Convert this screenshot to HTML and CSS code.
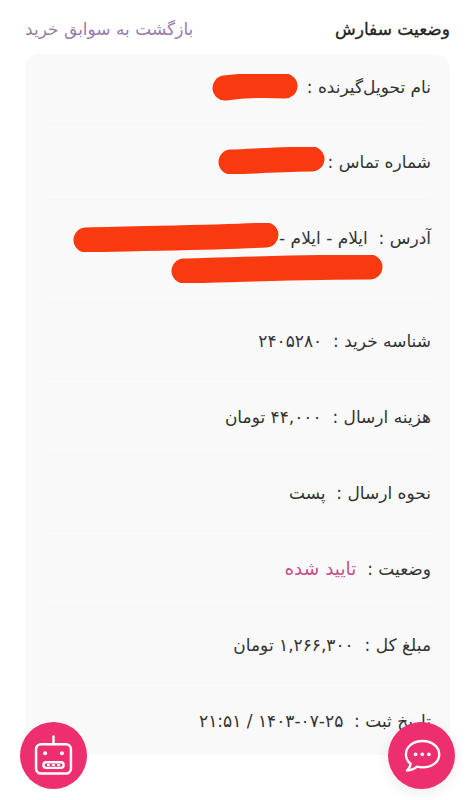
FILE: index.html
```html
<!DOCTYPE html>
<html lang="fa" dir="rtl">
<head>
<meta charset="utf-8">
<title>وضعیت سفارش</title>
<link rel="stylesheet" href="styles.css">
</head>
<body>
<div class="page">
  <header class="top">
    <h1 class="title">وضعیت سفارش</h1>
    <a class="back">بازگشت به سوابق خرید</a>
  </header>
  <main class="card">
    <div class="row row-name"><span class="label">نام تحویل‌گیرنده :</span>
      <svg class="scribble s-name" viewBox="0 0 86 27"><path d="M13 14 C35 11 55 11 73 12" /></svg></div>
    <div class="row row-phone"><span class="label">شماره تماس :</span>
      <svg class="scribble s-phone" viewBox="0 0 107 27"><path d="M13 15 C40 14 70 12 94 12" /></svg></div>
    <div class="row row-address">
      <div class="addr-line"><span class="label">آدرس :&nbsp; ایلام - ایلام -</span>
        <svg class="scribble s-addr1" viewBox="0 0 206 29"><path d="M13 17 C70 15 140 15 193 12" /></svg></div>
      <svg class="scribble s-addr2" viewBox="0 0 212 28"><path d="M13 16 C80 14 140 12 199 12" /></svg>
    </div>
    <div class="row"><span class="label">شناسه خرید :&nbsp; ۲۴۰۵۲۸۰</span></div>
    <div class="row"><span class="label">هزینه ارسال :&nbsp; ۴۴,۰۰۰ تومان</span></div>
    <div class="row"><span class="label">نحوه ارسال :&nbsp; پست</span></div>
    <div class="row"><span class="label">وضعیت :&nbsp; <span class="status">تایید شده</span></span></div>
    <div class="row"><span class="label">مبلغ کل :&nbsp; ۱,۲۶۶,۳۰۰ تومان</span></div>
    <div class="row row-last"><span class="label">تاریخ ثبت :&nbsp; ۲۵-۰۷-۱۴۰۳ / ۲۱:۵۱</span></div>
  </main>
</div>
<button class="fab fab-chat" aria-label="چت">
  <svg viewBox="0 0 40 40" class="fab-icon icon-chat"><path d="M21 6.500C12 6.500 5.500 12 5.500 19c0 3.500 1.700 6.500 4.300 8.700-.3 2.500-1.600 5-3.300 6.300 3.500-.1 7-1.500 9.300-3.600 1.800.5 3.500.7 5.200.7 9 0 15.500-5.300 15.500-12.100S30 6.500 21 6.500Z"/><circle class="dot" cx="14.500" cy="19" r="1.700"/><circle class="dot" cx="20.700" cy="19" r="1.700"/><circle class="dot" cx="26.900" cy="19" r="1.700"/></svg>
</button>
<button class="fab fab-bot" aria-label="ربات">
  <svg viewBox="0 0 40 40" class="fab-icon icon-bot"><path d="M20 3v7"/><rect x="4.500" y="10" width="31" height="26" rx="4.500"/><rect x="11" y="26" width="18" height="5" rx="2.500"/><path class="thin" d="M15 28.500h1M19.500 28.500h1M24 28.500h1"/><circle class="dot" cx="12.500" cy="18" r="1.800"/><circle class="dot" cx="27.500" cy="18" r="1.800"/></svg>
</button>
</body>
</html>
```
FILE: styles.css
```css
* { box-sizing: border-box; }
html, body { margin: 0; padding: 0; height: 800px; overflow: hidden; background: #fff; }
body { font-family: "DejaVu Sans", "Noto Sans", sans-serif; color: #333; position: relative; }
.page { padding: 19px 25px 0; }
.top { display: flex; justify-content: space-between; align-items: center; height: 20px; margin-bottom: 15px; }
.title { margin: 0; font-size: 17px; font-weight: 400; color: #222; -webkit-text-stroke: .3px #222; }
.back { font-size: 17px; color: #9b7bab; }
.card { background: #f9f9f9; border-radius: 14px 14px 0 0; height: 701px; padding: 0 19px; overflow: hidden; }
.row { height: 76px; display: flex; align-items: center; gap: 5px; font-size: 17px; border-bottom: 1px solid #f6f6f6; }
.row-name { height: 70px; padding-bottom: 4px; }
.row-address { height: 103px; display: block; padding-top: 24px; }
.row-last { border-bottom: 0; }
.label { white-space: nowrap; color: #333; }
.status { color: #c9508a; font-size: 18.500px; }
.addr-line { display: flex; align-items: center; gap: 1px; height: 27px; }
.scribble { display: block; flex: none; fill: none; stroke: #f93a10; stroke-width: 25; stroke-linecap: round; }
.s-name { width: 86px; height: 27px; margin: 2px 4px 0 0; }
.s-phone { width: 107px; height: 27px; margin: 0 -2px 2px 0; }
.s-addr1 { width: 206px; height: 29px; margin-right: -1px; }
.s-addr2 { width: 212px; height: 28px; margin: 4px 48px 0 0; }
.fab { position: fixed; width: 67px; height: 67px; border: 0; border-radius: 50%; background: #ee2f6f; padding: 0; display: flex; align-items: center; justify-content: center; bottom: 11px; }
.fab-chat { right: 20px; box-shadow: 0 4px 14px rgba(0,0,0,.08); }
.fab-bot { left: 20px; }
.fab-icon { fill: none; stroke: #fff; stroke-width: 2.200; stroke-linejoin: round; stroke-linecap: round; }
.icon-chat { width: 43px; height: 43px; }
.icon-bot { width: 45px; height: 45px; }
.fab-icon .dot { fill: #fff; stroke: none; }
.fab-icon .thin { stroke-width: 2; }
```
